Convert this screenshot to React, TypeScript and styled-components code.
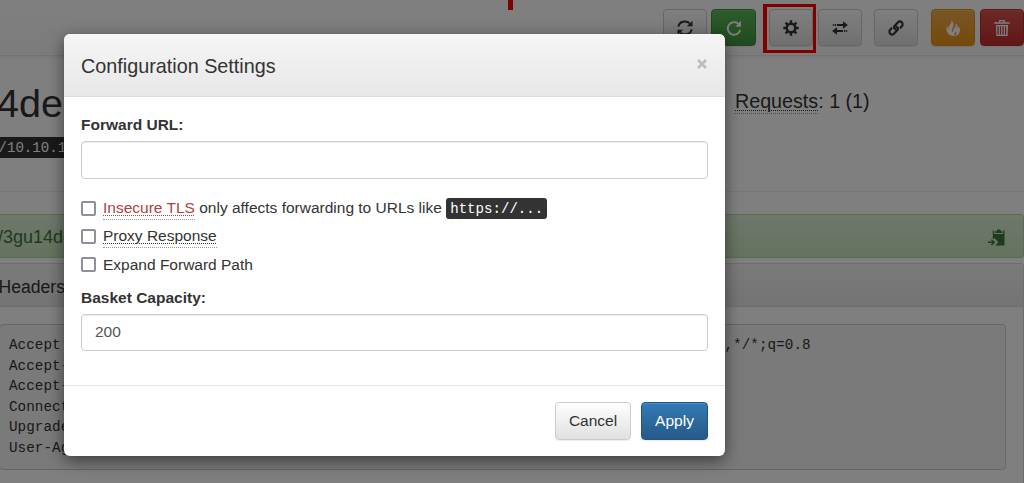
import React from "react";
import styled, { createGlobalStyle } from "styled-components";

const Global = createGlobalStyle`
  * { box-sizing: border-box; }
  body { margin: 0; background: #fff; color: #333; font: 15.5px/22px "Liberation Sans", Arial, sans-serif; }
`;

const Page = styled.div`
  height: 483px;
  overflow: hidden;
  white-space: nowrap;
`;

const Navbar = styled.nav`
  height: 56px;
  border-bottom: 1px solid #e4e4e4;
  background: linear-gradient(#fff, #f8f8f8);
  box-shadow: 0 1px 5px rgba(0, 0, 0, 0.075);
  display: flex;
  justify-content: space-between;
`;

const Marker = styled.div`
  width: 5px;
  height: 10px;
  margin-left: 508px;
  background: #ff0000;
`;

const Tools = styled.div`
  display: flex;
  padding-top: 9px;
`;

const tones = {
  plain: { from: "#ffffff", to: "#e0e0e0", line: "#cccccc", ink: "#333" },
  green: { from: "#5cb85c", to: "#419641", line: "#3e8f3e", ink: "#fff" },
  orange: { from: "#f0ad4e", to: "#eb9316", line: "#e38d13", ink: "#fff" },
  red: { from: "#d9534f", to: "#c12e2a", line: "#b92c28", ink: "#fff" },
  blue: { from: "#337ab7", to: "#265a88", line: "#245580", ink: "#fff" },
};
type Tone = keyof typeof tones;

const Button = styled.button<{ $tone: Tone; $width: number; $gap?: number }>`
  width: ${(p) => p.$width}px;
  height: 38px;
  margin: 0 0 0 ${(p) => p.$gap ?? 0}px;
  padding: 0;
  display: flex;
  align-items: center;
  justify-content: center;
  border: 1px solid ${(p) => tones[p.$tone].line};
  border-radius: 4px;
  color: ${(p) => tones[p.$tone].ink};
  font: inherit;
  background: linear-gradient(${(p) => tones[p.$tone].from}, ${(p) => tones[p.$tone].to});
  box-shadow: inset 0 1px 0 rgba(255, 255, 255, 0.15), 0 1px 1px rgba(0, 0, 0, 0.075);
`;

const ToolButton = styled(Button)`
  height: 37px;
`;

const Highlight = styled.div`
  width: 53px;
  height: 49px;
  margin: -5px 2px 0 7px;
  border: 3px solid #ff0000;
  border-left-width: 4px;
  padding: 2px 0 0 2px;
`;

const Summary = styled.section`
  height: 136px;
  display: flex;
  border-bottom: 1px solid #eee;
`;

const BasketColumn = styled.div`
  width: 735px;
  padding-top: 25px;
`;

const BasketName = styled.h1`
  margin: 0 0 12px -3px;
  font-size: 39.5px;
  line-height: 44px;
  font-weight: 400;
`;

const Code = styled.code<{ $flush?: boolean }>`
  display: inline-block;
  height: 21px;
  padding: 0 ${(p) => (p.$flush ? 0 : 4)}px;
  border-radius: ${(p) => (p.$flush ? 0 : 3)}px;
  background: #333;
  color: #fff;
  font: 14.1px/23px "Liberation Mono", monospace;
  text-indent: ${(p) => (p.$flush ? -1.5 : 0)}px;
  vertical-align: top;
`;

const InlineCode = styled(Code)`
  margin-top: 1px;
`;

const Requests = styled.div`
  padding-top: 33px;
  font-size: 19.7px;
  line-height: 24px;
`;

const Hint = styled.abbr<{ $danger?: boolean }>`
  display: inline-block;
  color: ${(p) => (p.$danger ? "#a94442" : "inherit")};
  text-decoration: underline dotted 1px;
  text-underline-offset: 2px;
  border-bottom: 1px dotted #999;
`;

const UrlBar = styled.div`
  height: 44px;
  margin-top: 22px;
  padding: 2px 18px 0 0;
  display: flex;
  align-items: center;
  justify-content: space-between;
  border: 1px solid #b2dba1;
  border-left: 0;
  border-radius: 0 4px 4px 0;
  background: linear-gradient(#dff0d8, #c8e5bc);
  color: #3c763d;
  font-size: 18px;
`;

const UrlText = styled.span`
  margin-left: -2px;
`;

const Panel = styled.section`
  height: 260px;
  margin-top: 5px;
  border: 1px solid #ddd;
  border-left: 0;
  border-radius: 0 4px 0 0;
`;

const PanelTitle = styled.h2`
  height: 43px;
  margin: 0;
  border-bottom: 1px solid #ddd;
  background: linear-gradient(#f5f5f5, #e8e8e8);
  font-size: 17.6px;
  line-height: 46px;
  font-weight: 400;
  text-indent: -1.5px;
`;

const Headers = styled.pre`
  width: 1007px;
  height: 146px;
  margin: 17px 0 0 -1px;
  padding: 10px 0 0 9px;
  border: 1px solid #ccc;
  border-radius: 4px;
  background: #f5f5f5;
  font: 14.3px/20.5px "Liberation Mono", monospace;
  letter-spacing: 0.04px;
`;

const Backdrop = styled.div`
  position: absolute;
  inset: 0;
  padding: 34px 0 0 64px;
  background: rgba(0, 0, 0, 0.5);
  overflow: hidden;
  white-space: nowrap;
`;

const Dialog = styled.div`
  width: 661px;
  height: 422px;
  border-radius: 6px;
  background: #fff;
  box-shadow: 0 5px 16px rgba(0, 0, 0, 0.5);
  overflow: hidden;
`;

const DialogHeader = styled.header`
  height: 63px;
  padding: 2px 18px 0 17px;
  display: flex;
  align-items: center;
  justify-content: space-between;
  border-bottom: 1px solid #ddd;
  background: linear-gradient(#f5f5f5, #e8e8e8);
`;

const DialogTitle = styled.h4`
  margin: 0;
  font-size: 19.8px;
  font-weight: 400;
`;

const DialogBody = styled.div`
  height: 288px;
  padding: 17px 17px 0;
`;

const Label = styled.label`
  display: block;
  height: 27px;
  font-weight: 700;
`;

const Input = styled.input<{ $height: number }>`
  display: block;
  width: 100%;
  height: ${(p) => p.$height}px;
  padding: 0 13px;
  border: 1px solid #ccc;
  border-radius: 4px;
  outline: 0;
  background: #fff;
  color: #555;
  font: inherit;
  box-shadow: inset 0 1px 1px rgba(0, 0, 0, 0.075);
`;

const Options = styled.div`
  padding: 18px 0 5px;
`;

const Option = styled.label`
  height: 28.3px;
  display: flex;
  align-items: flex-start;
`;

const Box = styled.input`
  appearance: none;
  width: 15px;
  height: 15px;
  margin: 3.500px 7px 0 0;
  border: 2px solid #8f8f9d;
  border-radius: 2px;
  background: #fff;
`;

const DialogFooter = styled.footer`
  height: 71px;
  padding: 16px 17px 0;
  display: flex;
  justify-content: flex-end;
  border-top: 1px solid #e5e5e5;
`;

const Svg = ({ size = 16, children }: { size?: number; children: React.ReactNode }) => (
  <svg width={size} height={size} viewBox="0 0 16 16" fill="currentColor">{children}</svg>
);

const SyncIcon = () => (
  <Svg>
    <path d="M1.4 6.6A6.6 6 0 0 1 12.6 3.2M14.6 9.4A6.6 6 0 0 1 3.4 12.8" fill="none" stroke="currentColor" strokeWidth="2" />
    <path d="M15.5.8v5.4h-5.6zM.5 15.2V9.8h5.6z" />
  </Svg>
);
const ReloadIcon = () => (
  <Svg>
    <path d="M12.7 4.1A6.3 6.3 0 1 0 14.2 10" fill="none" stroke="currentColor" strokeWidth="1.9" />
    <path d="M15 .8v6H9.2z" />
  </Svg>
);
const GearIcon = () => (
  <Svg>
    <path d="M6.8.3h2.4v3H6.800zM6.800 12.700h2.400v3H6.800zM.3 6.800h3v2.400h-3zM12.700 6.800h3v2.400h-3zM3.400 1.700l2.100 2.100-1.700 1.700-2.100-2.100zM12.600 1.700l1.700 1.700-2.100 2.100-1.700-1.700zM1.700 12.600l2.100-2.100 1.700 1.700-2.100 2.100zM14.300 12.600l-1.700 1.700-2.100-2.100 1.700-1.700z" />
    <circle cx="8" cy="8" r="4.300" fill="none" stroke="currentColor" strokeWidth="2.500" />
  </Svg>
);
const TransferIcon = () => (
  <Svg>
    <path d="M11 1.300 15.900 5 11 8.700V6H5V4h6zM5 7.300V10h6v2H5v2.700L.1 11zM.8 4h1v2h-1zM2.700 4h1.400v2H2.700zM12 10h1.300v2H12zM14.200 10h1v2h-1z" />
  </Svg>
);
const LinkIcon = () => (
  <Svg>
    <g fill="none" stroke="currentColor" strokeWidth="2.100" strokeLinejoin="round">
      <path d="M8.800 10.300 6.600 8.500c-.8-.8-.8-1.700-.1-2.500L9.800 2.500c1.300-1.300 2.900-1.200 4-.2s1.200 2.700 0 4L12 8.200" />
      <path d="M7.200 5.700l2.200 1.800c.8.8.8 1.700.1 2.500l-3.300 3.500c-1.300 1.300-2.900 1.200-4 .2s-1.200-2.700 0-4L4 7.800" />
    </g>
  </Svg>
);
const FireIcon = () => (
  <Svg>
    <path d="M6.200.2c1.900 1.600 2.800 3.700 2.100 5.900-.5 1.800-1.800 3-1.300 4.800.2.800.6 1.300 1 1.600-.1-2.200.5-3.400 1.700-4.700 1.300-1.500 1.200-2.900.8-4.300 2.500 1.300 2.300 3.500 1.900 5 .9-.2 1.100-1.200 1-2.400 1.700 2 2.200 4.300 1 6.600-.8 1.500-2.200 2.700-4.100 3.200.9-1.400 1.300-2.700.7-4.400-.7.700-1.800 1.500-1.500 2.900.1.600.2 1 .5 1.500-2.100.1-5.600-.5-7.300-3C.800 10.100 1.300 7.300 2.300 5.600c0 1.500.4 2.800 1.300 3.300-.1-2.100.4-3.100 1.500-4.500C6.200 3 6.600 1.700 6.200.2z" />
  </Svg>
);
const TrashIcon = () => (
  <Svg>
    <path fillRule="evenodd" d="M5 2.200V1.100C5 .5 5.400 0 6 0h4c.6 0 1 .5 1 1.100v1.100h4.700v1.600H.3V2.200zM6.200 1.200v1h3.600v-1zM2 5h12l-.4 11H2.400zM3.400 6.200v8.600h1.300V6.200zm2.500 0v8.600h1.300V6.200zm2.500 0v8.600h1.300V6.200zm2.500 0v8.600h1.300V6.200z" />
  </Svg>
);
const PasteIcon = () => (
  <Svg size={17}>
    <path d="M4.500 1.500h1.300v3.300h8.400V1.500h1.300v14H6.800L9.800 12.500 6.200 8.600 4.500 9.500zM6.800 3.800V2H8l.7-1.500h2.800L12.200 2h1.200v1.800z" />
    <path d="M0 12.500h5M3.200 10l2.600 2.500L3.200 15" fill="none" stroke="currentColor" strokeWidth="1.300" />
  </Svg>
);

const CloseMark = styled.svg`
  width: 10px;
  height: 10px;
  margin-bottom: 4px;
`;
const CloseIcon = () => (
  <CloseMark viewBox="0 0 10 10" fill="none" stroke="#bcbcbc" strokeWidth="2.500">
    <path d="M1 1l8 8M9 1L1 9" />
  </CloseMark>
);

const requestHeaders = [
  "Accept: text/html,application/xhtml+xml,application/xml;q=0.9,image/avif,image/webp,*/*;q=0.8",
  "Accept-Encoding: gzip, deflate",
  "Accept-Language: en-US,en;q=0.5",
  "Connection: keep-alive",
  "Upgrade-Insecure-Requests: 1",
  "User-Agent: Mozilla/5.0",
];

export default function App() {
  return (
    <>
      <Global />
      <Page>
        <Navbar>
          <Marker />
          <Tools>
            <ToolButton $tone="plain" $width={44}><SyncIcon /></ToolButton>
            <ToolButton $tone="green" $width={45} $gap={4}><ReloadIcon /></ToolButton>
            <Highlight><ToolButton $tone="plain" $width={44}><GearIcon /></ToolButton></Highlight>
            <ToolButton $tone="plain" $width={44}><TransferIcon /></ToolButton>
            <ToolButton $tone="plain" $width={44} $gap={12}><LinkIcon /></ToolButton>
            <ToolButton $tone="orange" $width={44} $gap={13}><FireIcon /></ToolButton>
            <ToolButton $tone="red" $width={44} $gap={5}><TrashIcon /></ToolButton>
          </Tools>
        </Navbar>
        <Summary>
          <BasketColumn>
            <BasketName>4de</BasketName>
            <Code $flush>/10.10.11</Code>
          </BasketColumn>
          <Requests><Hint>Requests</Hint>: 1 (1)</Requests>
        </Summary>
        <UrlBar><UrlText>/3gu14de</UrlText><PasteIcon /></UrlBar>
        <Panel>
          <PanelTitle>Headers</PanelTitle>
          <Headers>{requestHeaders.join("\n")}</Headers>
        </Panel>
      </Page>
      <Backdrop>
        <Dialog>
          <DialogHeader>
            <DialogTitle>Configuration Settings</DialogTitle>
            <CloseIcon />
          </DialogHeader>
          <DialogBody>
            <Label>Forward URL:</Label>
            <Input $height={38} />
            <Options>
              <Option>
                <Box type="checkbox" />
                <span><Hint $danger>Insecure TLS</Hint> only affects forwarding to URLs like <InlineCode>https://...</InlineCode></span>
              </Option>
              <Option><Box type="checkbox" /><Hint>Proxy Response</Hint></Option>
              <Option><Box type="checkbox" /><span>Expand Forward Path</span></Option>
            </Options>
            <Label>Basket Capacity:</Label>
            <Input $height={37} defaultValue="200" />
          </DialogBody>
          <DialogFooter>
            <Button $tone="plain" $width={76}>Cancel</Button>
            <Button $tone="blue" $width={67} $gap={10}>Apply</Button>
          </DialogFooter>
        </Dialog>
      </Backdrop>
    </>
  );
}
